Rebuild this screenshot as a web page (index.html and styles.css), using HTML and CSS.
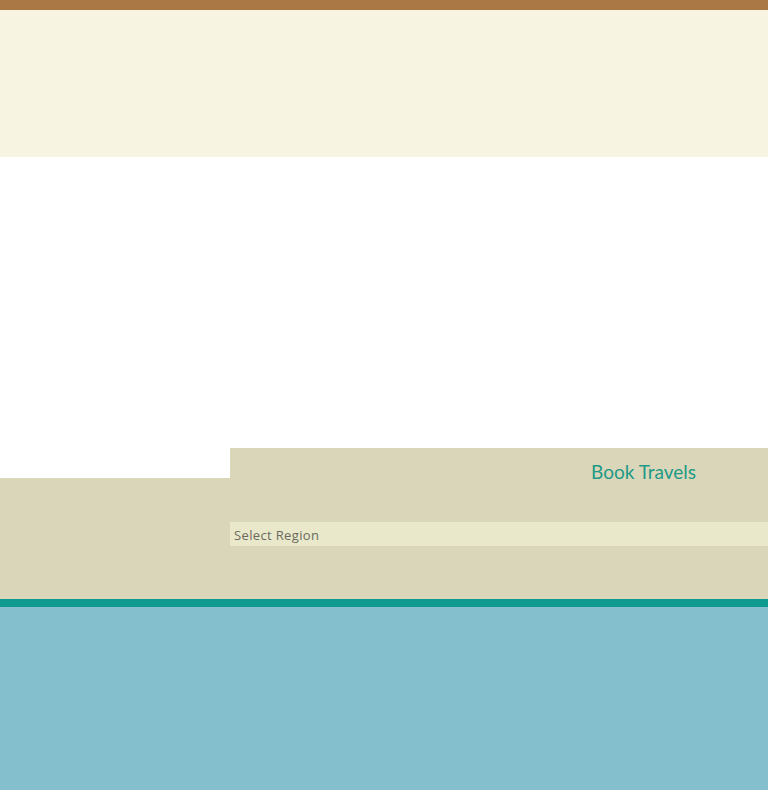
FILE: index.html
```html
<!DOCTYPE html>
<html>
<head>
<meta charset="utf-8">
<link rel="stylesheet" href="styles.css">
</head>
<body>
<div class="topbar"></div>
<header class="header"></header>
<section class="hero"></section>
<section class="booking">
  <div class="side"><div class="side-cap"></div></div>
  <div class="panel">
    <h2 class="title">Book Travels</h2>
    <div class="select">Select Region</div>
  </div>
</section>
<footer class="footer"></footer>
</body>
</html>
```
FILE: styles.css
```css
html, body { margin: 0; padding: 0; }
body {
  font-family: "Lato", "Open Sans", sans-serif;
  background: #84bfcd;
  min-height: 790px;
}
.topbar { height: 10px; background: #a97844; }
.header { height: 147px; background: #f7f5e1; }
.hero { height: 291px; background: #ffffff; }
.booking {
  display: grid;
  grid-template-columns: 230px 1fr;
  height: 151px;
  background: #dad6b9;
  border-bottom: 8px solid #0e9a8e;
}
.side-cap { height: 30px; background: #ffffff; }
.panel { padding-top: 12px; }
.title {
  margin: 0;
  font-weight: 400;
  font-size: 19px;
  line-height: 24px;
  color: #1e9a86;
  padding-left: 361px;
}
.select {
  margin-top: 38px;
  height: 24px;
  line-height: 26px;
  background: #e9e8ca;
  padding-left: 4px;
  font-family: "Open Sans", sans-serif;
  font-size: 13px;
  letter-spacing: 0.35px;
  color: #6a6a60;
}
.footer { height: 183px; background: #84bfcd; }
```
